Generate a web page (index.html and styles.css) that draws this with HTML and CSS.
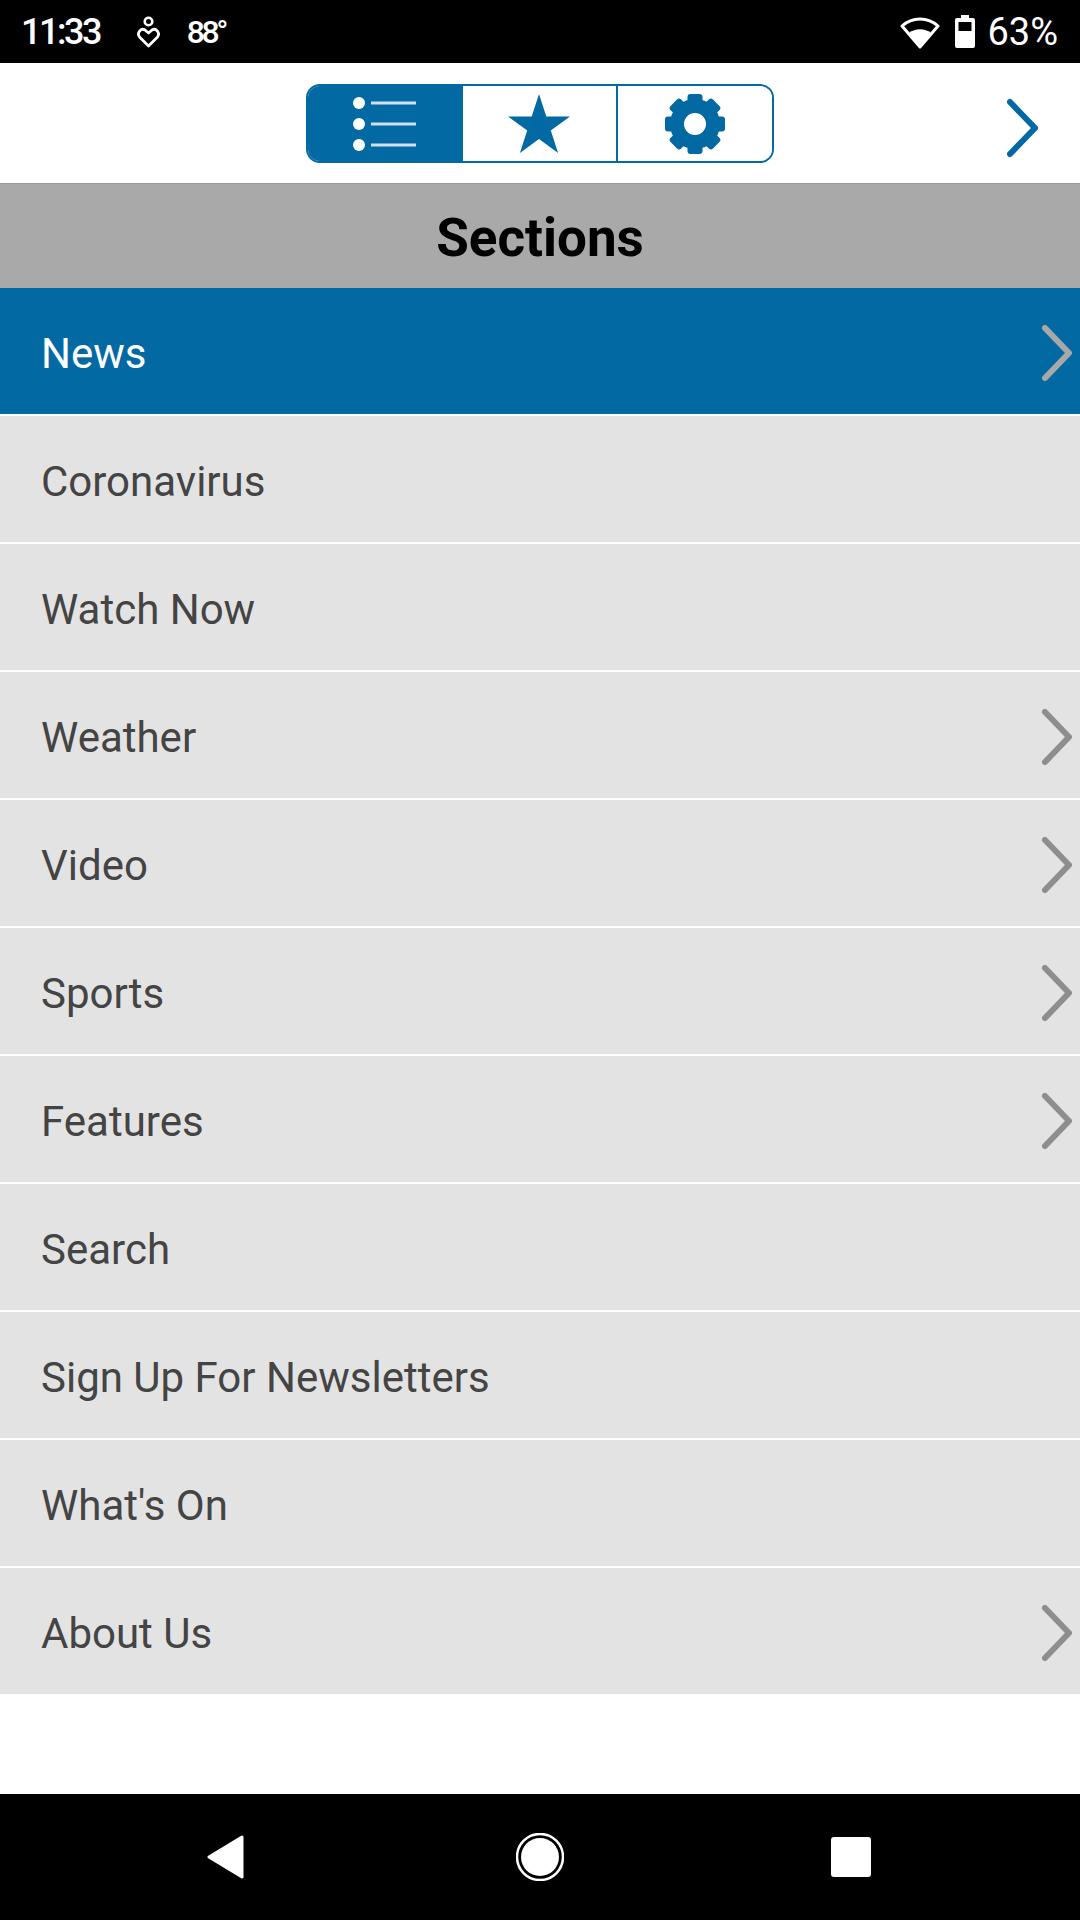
FILE: index.html
```html
<html lang="en">
<head>
    <meta charset="UTF-8">
    <meta name="viewport" content="width=device-width, initial-scale=1.0">
    <title>Sections</title>
    <link rel="stylesheet" href="styles.css">
</head>
<body>
    <div class="status-bar">
        <div class="status-left">
            <span class="clock">11:33</span>
            <svg class="health-icon" width="23" height="32" viewBox="0 0 23 32">
                <circle cx="11.500" cy="5.500" r="3.800" fill="none" stroke="#fff" stroke-width="2.600"/>
                <path d="M11.500 30 L2.500 21 C-0.500 17 4 11.500 8 14 L11.500 17 L15 14 C19 11.500 23.500 17 20.500 21 Z" fill="none" stroke="#fff" stroke-width="2.800" stroke-linejoin="round"/>
            </svg>
            <span class="temp">88°</span>
        </div>
        <div class="status-right">
            <svg class="wifi-icon" width="40" height="34" viewBox="0 0 40 34">
                <path d="M20 32 L2 11 C12 1.500 28 1.500 38 11 Z" fill="none" stroke="#fff" stroke-width="3" stroke-linejoin="round"/>
                <path d="M20 32 L9 18 C15 13 25 13 31 18 Z" fill="#fff"/>
            </svg>
            <svg class="battery-icon" width="20" height="34" viewBox="0 0 20 34">
                <path d="M6 1 H14 V4 H18 Q20 4 20 6 V32 Q20 34 18 34 H2 Q0 34 0 32 V6 Q0 4 2 4 H6 Z" fill="#fff"/>
                <rect x="3.500" y="8" width="13" height="9" fill="#000"/>
            </svg>
            <span class="battery-pct">63%</span>
        </div>
    </div>

    <div class="toolbar">
        <div class="segments">
            <button class="segment segment-active">
                <svg width="63" height="54" viewBox="0 0 63 54">
                    <circle cx="6" cy="6" r="6" fill="#fff"/>
                    <circle cx="6" cy="27" r="6" fill="#fff"/>
                    <circle cx="6" cy="48" r="6" fill="#fff"/>
                    <rect x="18" y="4.500" width="45" height="3" fill="#cfe0ee"/>
                    <rect x="18" y="25.500" width="45" height="3" fill="#cfe0ee"/>
                    <rect x="18" y="46.500" width="45" height="3" fill="#cfe0ee"/>
                </svg>
            </button>
            <button class="segment">
                <svg width="62" height="60" viewBox="0 0 62 60">
                    <polygon points="31,0 38.300,22.500 62,22.500 42.800,36.400 50.100,59 31,45 11.900,59 19.200,36.400 0,22.500 23.700,22.500" fill="#0369a3"/>
                </svg>
            </button>
            <button class="segment">
                <svg width="60" height="60" viewBox="0 0 60 60">
                    <g fill="#0369a3">
                        <rect x="22.500" y="0" width="15" height="14" rx="3"/>
                        <rect x="22.500" y="46" width="15" height="14" rx="3"/>
                        <rect x="0" y="22.500" width="14" height="15" rx="3"/>
                        <rect x="46" y="22.500" width="14" height="15" rx="3"/>
                        <rect x="22.500" y="0" width="15" height="14" rx="3" transform="rotate(45 30 30)"/>
                        <rect x="22.500" y="0" width="15" height="14" rx="3" transform="rotate(135 30 30)"/>
                        <rect x="22.500" y="0" width="15" height="14" rx="3" transform="rotate(225 30 30)"/>
                        <rect x="22.500" y="0" width="15" height="14" rx="3" transform="rotate(315 30 30)"/>
                    </g>
                    <circle cx="30" cy="30" r="18" fill="none" stroke="#0369a3" stroke-width="14"/>
                </svg>
            </button>
        </div>
        <svg class="toolbar-next" width="34" height="60" viewBox="0 0 34 60">
            <path d="M4 4 L29 30 L4 56" fill="none" stroke="#0369a3" stroke-width="6" stroke-linecap="round" stroke-linejoin="round"/>
        </svg>
    </div>

    <h1 class="sections-title">Sections</h1>

    <ul class="section-list">
        <li class="section-row section-row-active">
            News
            <svg class="row-arrow" width="32" height="56" viewBox="0 0 32 56"><path d="M5 3 L29 28 L5 53"/></svg>
        </li>
        <li class="section-row">Coronavirus</li>
        <li class="section-row">Watch Now</li>
        <li class="section-row">
            Weather
            <svg class="row-arrow" width="32" height="56" viewBox="0 0 32 56"><path d="M5 3 L29 28 L5 53"/></svg>
        </li>
        <li class="section-row">
            Video
            <svg class="row-arrow" width="32" height="56" viewBox="0 0 32 56"><path d="M5 3 L29 28 L5 53"/></svg>
        </li>
        <li class="section-row">
            Sports
            <svg class="row-arrow" width="32" height="56" viewBox="0 0 32 56"><path d="M5 3 L29 28 L5 53"/></svg>
        </li>
        <li class="section-row">
            Features
            <svg class="row-arrow" width="32" height="56" viewBox="0 0 32 56"><path d="M5 3 L29 28 L5 53"/></svg>
        </li>
        <li class="section-row">Search</li>
        <li class="section-row">Sign Up For Newsletters</li>
        <li class="section-row">What's On</li>
        <li class="section-row section-row-last">
            About Us
            <svg class="row-arrow" width="32" height="56" viewBox="0 0 32 56"><path d="M5 3 L29 28 L5 53"/></svg>
        </li>
    </ul>

    <div class="nav-bar">
        <svg width="38" height="44" viewBox="0 0 38 44">
            <path d="M35 2 L2 22 L35 42 Z" fill="#fff" stroke="#fff" stroke-width="3" stroke-linejoin="round"/>
        </svg>
        <svg width="48" height="48" viewBox="0 0 48 48">
            <circle cx="24" cy="24" r="23" fill="none" stroke="#fff" stroke-width="2.500"/>
            <circle cx="24" cy="24" r="19" fill="#fff"/>
        </svg>
        <div class="nav-square"></div>
    </div>
</body>
</html>
```

FILE: styles.css
```css
* {
    box-sizing: border-box;
}

body {
    font-family: Roboto, Arial, sans-serif;
    background-color: white;
    display: flex;
    flex-direction: column;
    width: 1080px;
    height: 1920px;
    margin: 0;
    overflow: hidden;
}

.status-bar {
    display: flex;
    justify-content: space-between;
    align-items: center;
    height: 63px;
    padding: 0 22px 0 21px;
    background-color: #000;
    color: white;
}

.status-left, .status-right {
    display: flex;
    align-items: center;
}

.clock {
    font-size: 36px;
    font-weight: 500;
    letter-spacing: -2.5px;
}

.health-icon {
    margin-left: 37px;
}

.temp {
    margin-left: 27px;
    font-size: 32px;
    font-weight: 500;
    letter-spacing: -3.5px;
}

.wifi-icon {
    margin-right: 15px;
}

.battery-icon {
    margin-bottom: 2px;
}

.battery-pct {
    margin-left: 12px;
    font-size: 38px;
}

.toolbar {
    display: grid;
    grid-template-columns: 1fr auto 1fr;
    align-items: center;
    height: 121px;
    border-bottom: 1px solid #999;
}

.segments {
    grid-column: 2;
    display: flex;
    width: 468px;
    height: 79px;
    margin: 1px 0 0 -1px;
    border: 2px solid #0369a3;
    border-radius: 14px;
    overflow: hidden;
}

.segment {
    display: flex;
    justify-content: center;
    align-items: center;
    flex: 1;
    padding: 0;
    border: none;
    border-left: 2px solid #0369a3;
    background-color: white;
}

.segment-active {
    flex: none;
    width: 153px;
    border-left: none;
    background-color: #0369a3;
}

.toolbar-next {
    justify-self: end;
    margin: 10px 40px 0 0;
}

.sections-title {
    height: 104px;
    margin: 0;
    background-color: #a9a9a9;
    color: #000;
    font-size: 53px;
    font-weight: 700;
    line-height: 108px;
    text-align: center;
}

.section-list {
    flex: 1;
    margin: 0;
    padding: 0;
    list-style: none;
}

.section-row {
    display: flex;
    justify-content: space-between;
    align-items: center;
    height: 128px;
    padding: 5px 8px 0 41px;
    border-bottom: 2px solid white;
    background-color: #e3e3e3;
    color: #444;
    font-size: 42px;
}

.section-row-active {
    background-color: #0369a3;
    color: white;
}

.section-row-last {
    border-bottom: none;
    height: 126px;
}

.row-arrow {
    margin-bottom: 2px;
}

.row-arrow path {
    fill: none;
    stroke: #8e8e8e;
    stroke-width: 6;
    stroke-linecap: round;
    stroke-linejoin: round;
}

.section-row-active .row-arrow path {
    stroke: #a8a8a8;
}

.nav-bar {
    height: 126px;
    background-color: #000;
    display: grid;
    grid-template-columns: 207px 38px 271px 48px 267px 40px;
    align-items: center;
}

.nav-bar svg:nth-child(1) {
    grid-column: 2;
}

.nav-bar svg:nth-child(2) {
    grid-column: 4;
}

.nav-square {
    grid-column: 6;
    height: 40px;
    border-radius: 3px;
    background-color: white;
}
```
